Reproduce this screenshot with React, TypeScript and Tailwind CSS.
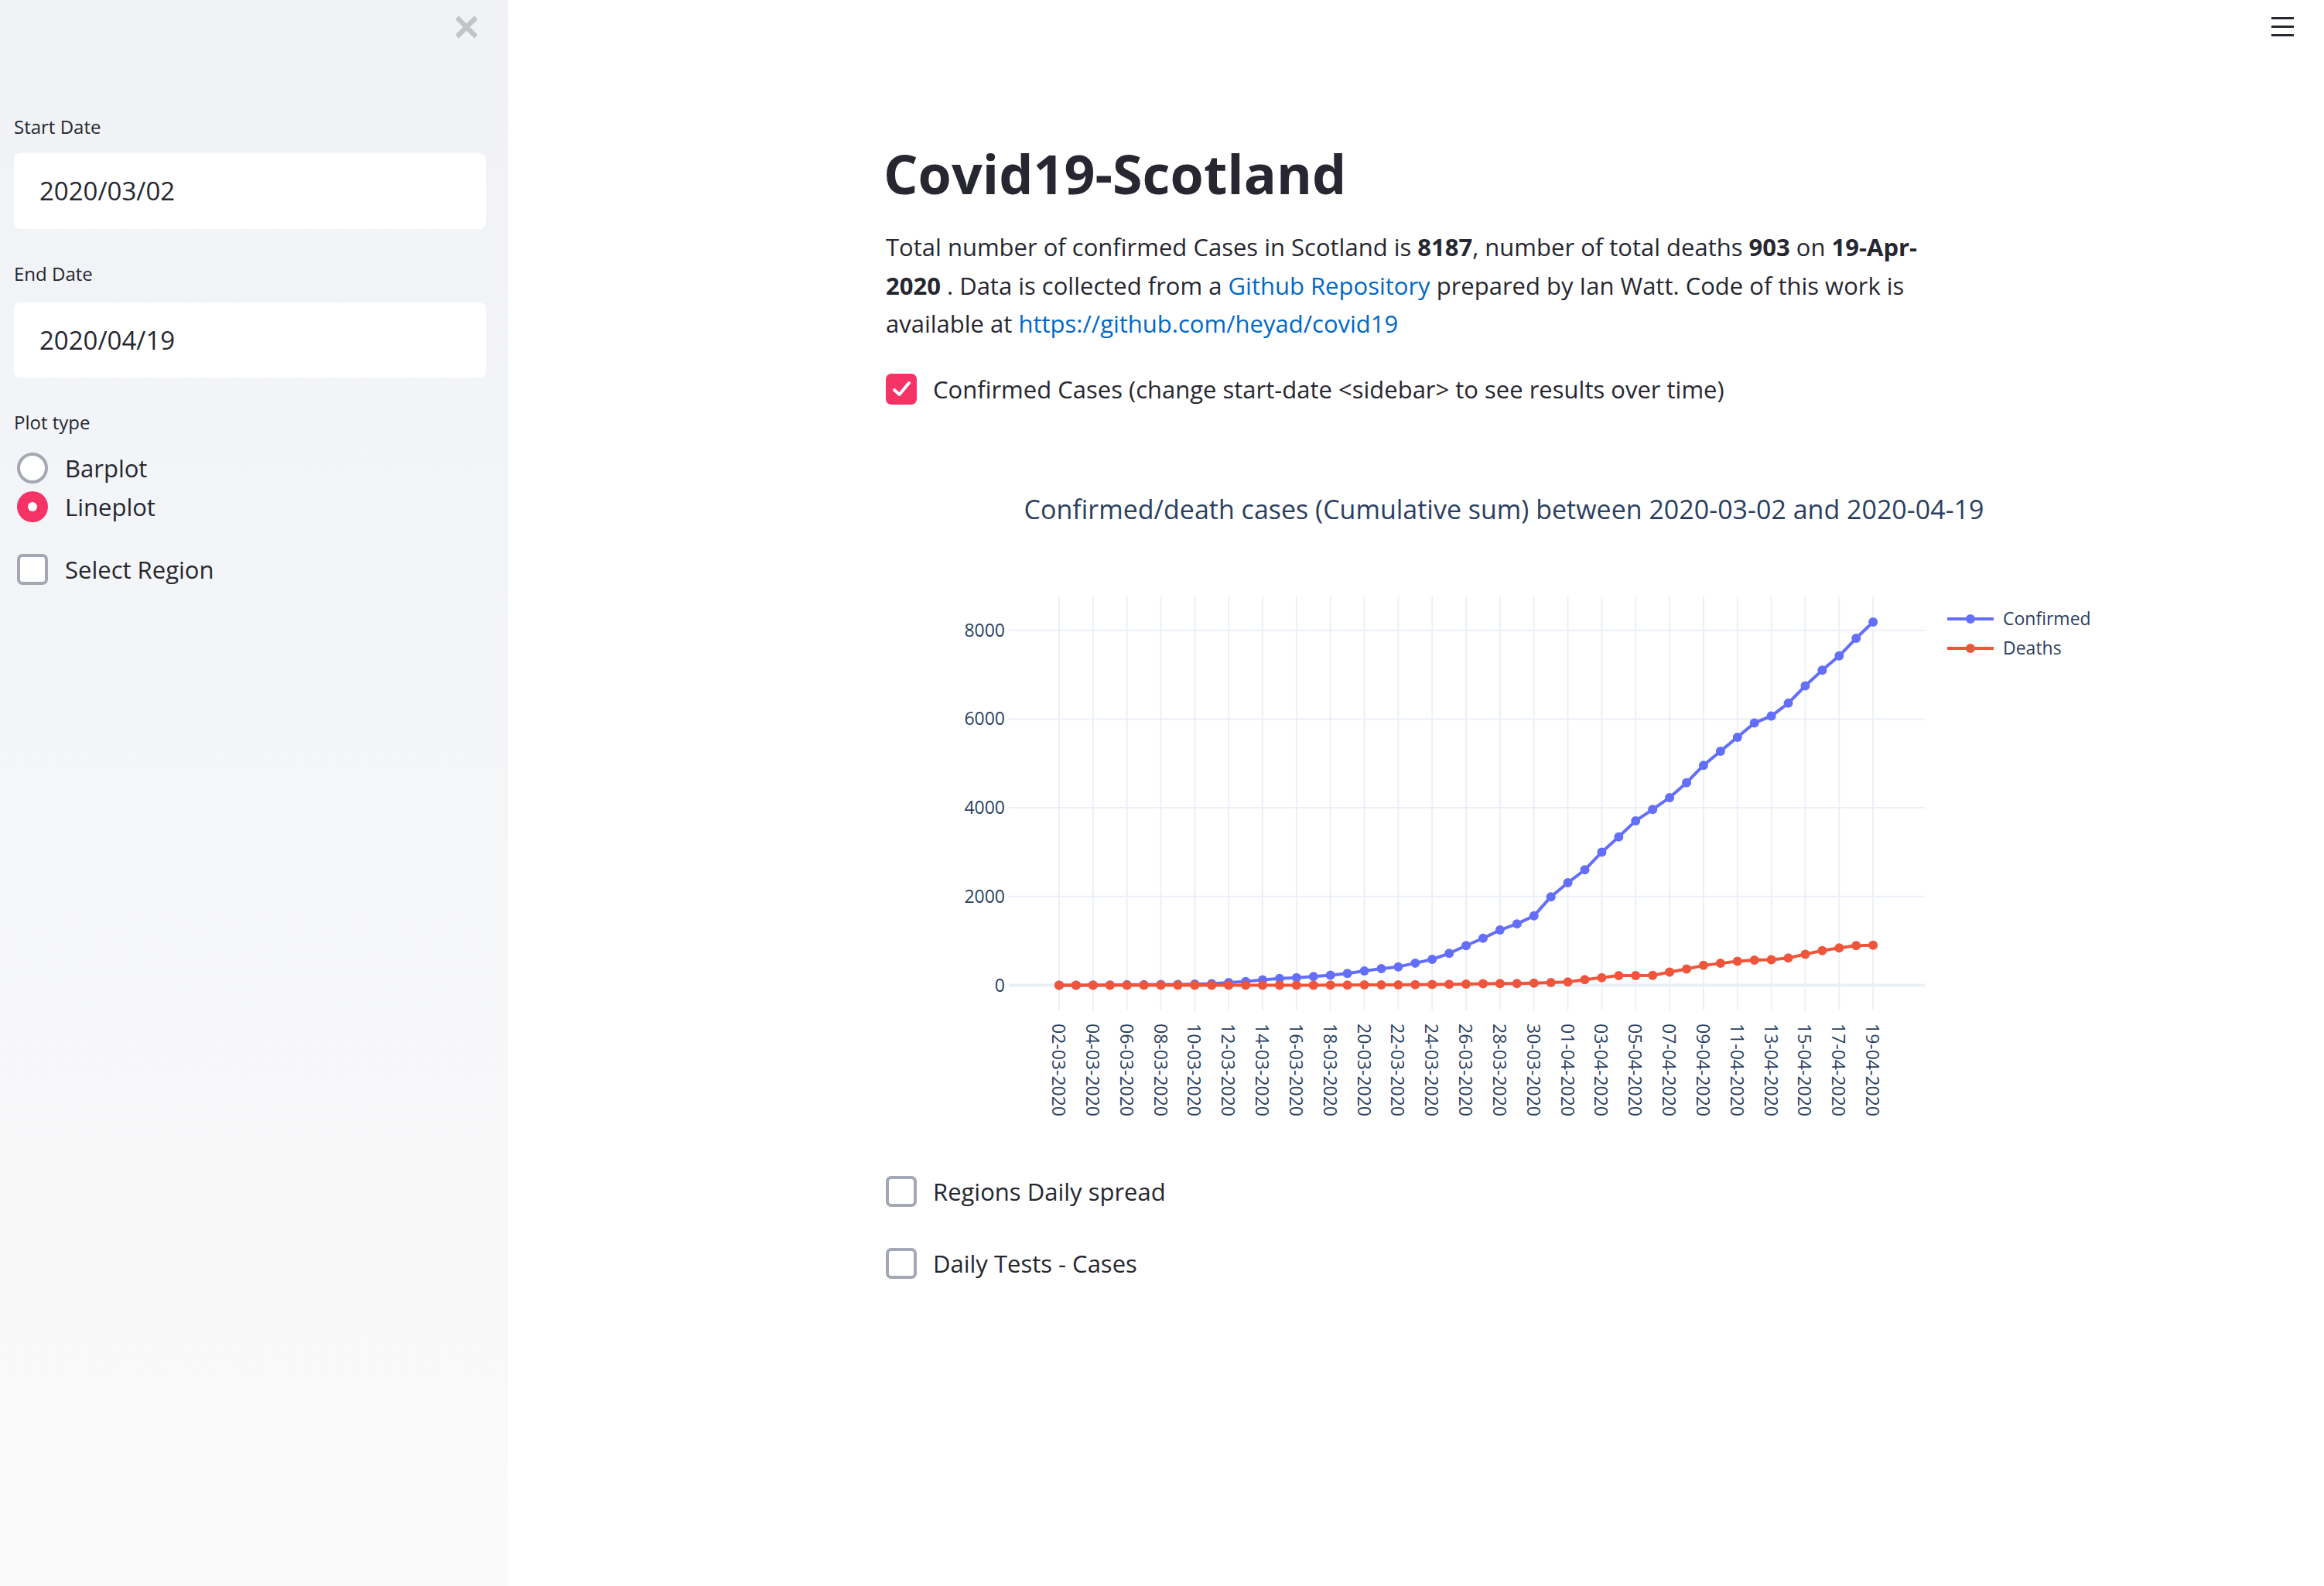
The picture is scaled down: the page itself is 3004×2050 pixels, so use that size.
import React from "react";

const CONFIRMED = [
  1, 2, 3, 6, 11, 11, 16, 18, 27, 36, 60, 85, 121, 153, 171, 195, 227, 266, 322, 373, 416, 499, 584, 719, 894,
  1059, 1245, 1384, 1563, 1993, 2310, 2602, 3001, 3345, 3706, 3961, 4229, 4565, 4957, 5275, 5590, 5912, 6067,
  6358, 6748, 7102, 7423, 7820, 8187,
];
const DEATHS = [
  0, 0, 0, 0, 0, 0, 0, 0, 0, 0, 0, 1, 1, 1, 2, 2, 3, 6, 7, 10, 10, 14, 16, 22, 25, 33, 40, 41, 47, 60, 76, 126,
  172, 218, 220, 222, 296, 366, 447, 495, 542, 566, 575, 615, 699, 779, 841, 893, 903,
];

// plot geometry (svg coords)
const X0 = 224;
const DX = 21.92;
const Y0 = 712.5;
const KY = 0.05735;
const px = (i: number) => X0 + i * DX;
const py = (v: number) => Y0 - v * KY;

function fmtDate(i: number) {
  const d = new Date(2020, 2, 2 + i);
  const dd = String(d.getDate()).padStart(2, "0");
  const mm = String(d.getMonth() + 1).padStart(2, "0");
  return `${dd}-${mm}-2020`;
}

function Trace({ data, color }: { data: number[]; color: string }) {
  const pts = data.map((v, i) => `${px(i)},${py(v)}`).join(" ");
  return (
    <g>
      <polyline points={pts} fill="none" stroke={color} strokeWidth={4} strokeLinejoin="round" />
      {data.map((v, i) => (
        <circle key={i} cx={px(i)} cy={py(v)} r={6} fill={color} />
      ))}
    </g>
  );
}

function Chart() {
  const ticks = Array.from({ length: 25 }, (_, k) => k * 2);
  return (
    <svg width={1600} height={910} fontFamily="'Open Sans', sans-serif" className="block">
      <text x={799} y={110} textAnchor="middle" fontSize={34} fill="#2a3f5f">
        Confirmed/death cases (Cumulative sum) between 2020-03-02 and 2020-04-19
      </text>

      {ticks.map((i) => (
        <line key={i} x1={px(i)} x2={px(i)} y1={210} y2={745} stroke="#ebf0f8" strokeWidth={2} />
      ))}
      {[2000, 4000, 6000, 8000].map((v) => (
        <line key={v} x1={159} x2={1343} y1={py(v)} y2={py(v)} stroke="#ebf0f8" strokeWidth={2} />
      ))}
      <line x1={159} x2={1343} y1={py(0)} y2={py(0)} stroke="#ebf0f8" strokeWidth={4} />

      <Trace data={CONFIRMED} color="#636efa" />
      <Trace data={DEATHS} color="#ef553b" />

      {[0, 2000, 4000, 6000, 8000].map((v) => (
        <text key={v} x={154} y={py(v) + 8} textAnchor="end" fontSize={23} fill="#2a3f5f">
          {v}
        </text>
      ))}
      {ticks.map((i) => (
        <text
          key={i}
          x={px(i)}
          y={762}
          transform={`rotate(90 ${px(i)} 762)`}
          dominantBaseline="central"
          fontSize={23}
          fill="#2a3f5f"
        >
          {fmtDate(i)}
        </text>
      ))}

      <line x1={1372} x2={1432} y1={239} y2={239} stroke="#636efa" strokeWidth={4} />
      <circle cx={1402} cy={239} r={6} fill="#636efa" />
      <text x={1444} y={247} fontSize={23} fill="#2a3f5f">Confirmed</text>
      <line x1={1372} x2={1432} y1={277} y2={277} stroke="#ef553b" strokeWidth={4} />
      <circle cx={1402} cy={277} r={6} fill="#ef553b" />
      <text x={1444} y={285} fontSize={23} fill="#2a3f5f">Deaths</text>
    </svg>
  );
}

function Checkbox({ checked = false }: { checked?: boolean }) {
  if (checked) {
    return (
      <div className="w-[40px] h-[40px] shrink-0 rounded-[7px] bg-[#f63366]">
        <svg width="40" height="40" viewBox="0 0 40 40">
          <path d="M11 21 L17.5 27 L30 12" fill="none" stroke="#fff" strokeWidth="4" strokeLinecap="round" strokeLinejoin="round" />
        </svg>
      </div>
    );
  }
  return <div className="w-[40px] h-[40px] shrink-0 rounded-[7px] border-[4px] border-[#a3a8b4] bg-white" />;
}

function Radio({ checked = false }: { checked?: boolean }) {
  if (checked) {
    return (
      <div className="w-[40px] h-[40px] shrink-0 rounded-full bg-[#f63366] flex items-center justify-center">
        <div className="w-[12px] h-[12px] rounded-full bg-white" />
      </div>
    );
  }
  return <div className="w-[40px] h-[40px] shrink-0 rounded-full border-[4px] border-[#a3a8b4] bg-white" />;
}

function DateInput({ value, className }: { value: string; className: string }) {
  return (
    <div className={`w-[610px] rounded-lg bg-white pl-[33px] flex items-center text-[33px] ${className}`}>{value}</div>
  );
}

export default function App() {
  return (
    <div className="flex w-[3004px] min-h-[2050px] font-['Open_Sans',sans-serif] text-[#262730]">
      <aside className="w-[657px] shrink-0 min-h-[2050px] bg-linear-to-b from-[#f0f2f6] to-[#fafafa] px-[18px]">
        <div className="flex justify-end pt-[21px] pr-[22px]">
          <svg width="28" height="28" viewBox="0 0 28 28">
            <path d="M4 4 L24 24 M24 4 L4 24" stroke="#c3c4c8" strokeWidth="6.5" strokeLinecap="square" />
          </svg>
        </div>

        <div className="mt-[100px] text-[24px] leading-[30px]">Start Date</div>
        <DateInput value="2020/03/02" className="mt-[19px] h-[98px]" />

        <div className="mt-[43px] text-[24px] leading-[30px]">End Date</div>
        <DateInput value="2020/04/19" className="mt-[22px] h-[97px]" />

        <div className="mt-[43px] text-[24px] leading-[30px]">Plot type</div>
        <div className="mt-[19px] flex flex-col">
          <div className="h-[50px] flex items-center gap-[22px] pl-[4px] text-[31px]">
            <Radio />
            <span>Barplot</span>
          </div>
          <div className="h-[50px] flex items-center gap-[22px] pl-[4px] text-[31px]">
            <Radio checked />
            <span>Lineplot</span>
          </div>
        </div>

        <div className="mt-[31px] h-[50px] flex items-center gap-[22px] pl-[4px] text-[31px]">
          <Checkbox />
          <span>Select Region</span>
        </div>
      </aside>

      <main className="relative flex-1 min-h-[2050px] bg-white">
        <div className="absolute right-[39px] top-[22px] flex flex-col gap-[8px]">
          <div className="w-[29px] h-[3px] bg-[#262730]" />
          <div className="w-[29px] h-[3px] bg-[#262730]" />
          <div className="w-[29px] h-[3px] bg-[#262730]" />
        </div>

        <div className="mx-auto w-[1371px] pt-[182px]">
          <h1 className="-ml-[3px] text-[70px] leading-[84px] font-bold">Covid19-Scotland</h1>

          <p className="mt-[29px] text-[31px] leading-[49.5px]">
            Total number of confirmed Cases in Scotland is <b>8187</b>, number of total deaths <b>903</b> on{" "}
            <b>19-Apr-2020</b> . Data is collected from a{" "}
            <a className="text-[#0068c9]">Github Repository</a> prepared by Ian Watt. Code of this work is available at{" "}
            <a className="text-[#0068c9]">https://github.com/heyad/covid19</a>
          </p>

          <div className="mt-[35px] h-[49px] flex items-center gap-[21px] text-[31px]">
            <Checkbox checked />
            <span>Confirmed Cases (change start-date &lt;sidebar&gt; to see results over time)</span>
          </div>

          <div className="mt-[33px]">
            <Chart />
          </div>

          <div className="mt-[45px] h-[49px] flex items-center gap-[21px] text-[31px]">
            <Checkbox />
            <span>Regions Daily spread</span>
          </div>
          <div className="mt-[44px] h-[49px] flex items-center gap-[21px] text-[31px]">
            <Checkbox />
            <span>Daily Tests - Cases</span>
          </div>
        </div>
      </main>
    </div>
  );
}
